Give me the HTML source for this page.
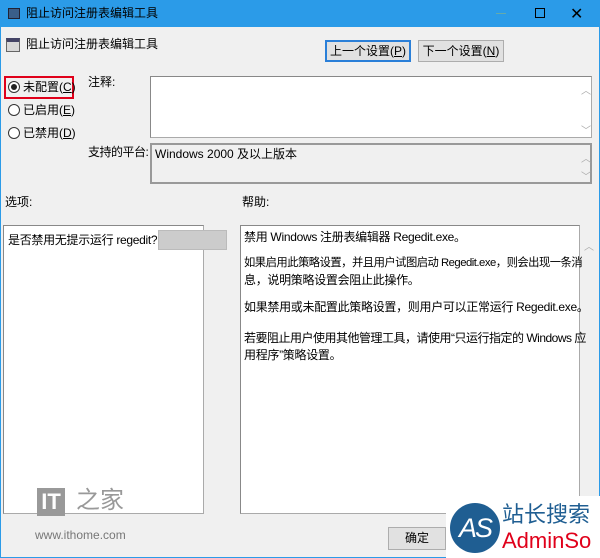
<!DOCTYPE html>
<html><head><meta charset="utf-8"><style>
*{margin:0;padding:0;box-sizing:border-box}
body{width:600px;height:558px;overflow:hidden;background:#f0f0f0;font-family:"Liberation Sans","Noto Sans CJK SC",sans-serif;font-size:12px;color:#000;position:relative}
.a{position:absolute}
.win{left:0;top:0;width:600px;height:558px;border:1px solid #2b9be8;border-top:none}
.title{left:0;top:0;width:600px;height:27px;background:#2b9be8}
.box{background:#fff;border:1px solid #aaa;border-top-color:#888;border-left-color:#888}
.btn{background:#e1e1e1;border:1px solid #adadad;text-align:center;line-height:20px;font-size:12px}
.rad{width:12px;height:12px;border:1px solid #333;border-radius:50%;background:#fff}
.sb{color:#aaa;font-size:10px}
.h{position:absolute;left:244px;white-space:nowrap;letter-spacing:-0.3px;line-height:16px}
</style></head><body>
<div class="a title"></div>
<div class="a win"></div>
<div class="a" style="left:8px;top:8px;width:12px;height:11px;background:#3a5f8a;border:1px solid #223"></div>
<div class="a" style="left:26px;top:5px;font-size:12px;line-height:16px">阻止访问注册表编辑工具</div>
<div class="a" style="left:570px;top:4px;font-size:16px">✕</div>
<div class="a" style="left:535px;top:8px;width:10px;height:10px;border:1px solid #000"></div>
<div class="a" style="left:496px;top:13px;width:10px;height:1px;background:#6aa"></div>
<div class="a" style="left:6px;top:38px;width:14px;height:14px;background:#d8d8d8;border:1px solid #666;border-top:4px solid #446"></div>
<div class="a" style="left:26px;top:36px;line-height:16px">阻止访问注册表编辑工具</div>
<div class="a btn" style="left:325px;top:40px;width:86px;height:22px;border:2px solid #2a7fd8;line-height:18px">上一个设置(<u>P</u>)</div>
<div class="a btn" style="left:418px;top:40px;width:86px;height:22px">下一个设置(<u>N</u>)</div>
<div class="a" style="left:4px;top:76px;width:70px;height:23px;border:2px solid #e0001a"></div>
<div class="a rad" style="left:8px;top:81px"><div style="width:6px;height:6px;background:#222;border-radius:50%;margin:2px"></div></div>
<div class="a" style="left:23px;top:79px;line-height:16px">未配置(<u>C</u>)</div>
<div class="a rad" style="left:8px;top:104px"></div>
<div class="a" style="left:23px;top:102px;line-height:16px">已启用(<u>E</u>)</div>
<div class="a rad" style="left:8px;top:127px"></div>
<div class="a" style="left:23px;top:125px;line-height:16px">已禁用(<u>D</u>)</div>
<div class="a" style="left:88px;top:74px;line-height:16px">注释:</div>
<div class="a box" style="left:150px;top:76px;width:442px;height:62px"></div>
<div class="a sb" style="left:581px;top:82px">︿</div>
<div class="a sb" style="left:581px;top:122px">﹀</div>
<div class="a" style="left:88px;top:144px;line-height:16px;letter-spacing:-0.5px">支持的平台:</div>
<div class="a box" style="left:150px;top:143px;width:442px;height:41px;background:#f0f0f0;border:2px solid #999"></div>
<div class="a" style="left:155px;top:146px;line-height:16px">Windows 2000 及以上版本</div>
<div class="a sb" style="left:581px;top:150px">︿</div>
<div class="a sb" style="left:581px;top:168px">﹀</div>
<div class="a" style="left:5px;top:194px;line-height:16px">选项:</div>
<div class="a" style="left:242px;top:194px;line-height:16px">帮助:</div>
<div class="a box" style="left:3px;top:225px;width:201px;height:289px"></div>
<div class="a" style="left:8px;top:232px;line-height:16px;white-space:nowrap;letter-spacing:-0.3px">是否禁用无提示运行 regedit?</div>
<div class="a" style="left:158px;top:230px;width:69px;height:20px;background:#ccc;border:1px solid #bbb"></div>
<div class="a box" style="left:240px;top:225px;width:340px;height:289px"></div>
<div class="a sb" style="left:584px;top:238px">︿</div>
<div class="h" style="top:229px">禁用 Windows 注册表编辑器 Regedit.exe。</div>
<div class="h" style="top:255px;letter-spacing:-0.5px;font-size:11.3px">如果启用此策略设置，并且用户试图启动 Regedit.exe，则会出现一条消</div>
<div class="h" style="top:272px">息，说明策略设置会阻止此操作。</div>
<div class="h" style="top:299px">如果禁用或未配置此策略设置，则用户可以正常运行 Regedit.exe。</div>
<div class="h" style="top:330px;letter-spacing:-0.5px">若要阻止用户使用其他管理工具，请使用“只运行指定的 Windows 应</div>
<div class="h" style="top:347px">用程序”策略设置。</div>
<div class="a btn" style="left:388px;top:527px;width:58px;height:23px">确定</div>
<div class="a" style="left:37px;top:488px;width:28px;height:28px;background:#999;color:#fff;font-weight:bold;font-size:22px;line-height:28px;text-align:center">IT</div>
<div class="a" style="left:76px;top:486px;color:#999;font-size:24px;line-height:30px">之家</div>
<div class="a" style="left:35px;top:528px;color:#777;font-size:12px">www.ithome.com</div>
<div class="a" style="left:446px;top:496px;width:154px;height:62px;background:#fff"></div>
<div class="a" style="left:450px;top:503px;width:50px;height:50px;border-radius:50%;background:#1f5e92;color:#fff;font-size:27px;font-style:italic;line-height:50px;text-align:center;letter-spacing:-2px">AS</div>
<div class="a" style="left:502px;top:502px;color:#1f5e92;font-size:22px;line-height:26px">站长搜索</div>
<div class="a" style="left:502px;top:528px;color:#e0001a;font-size:22px;line-height:26px">AdminSo</div>
</body></html>
